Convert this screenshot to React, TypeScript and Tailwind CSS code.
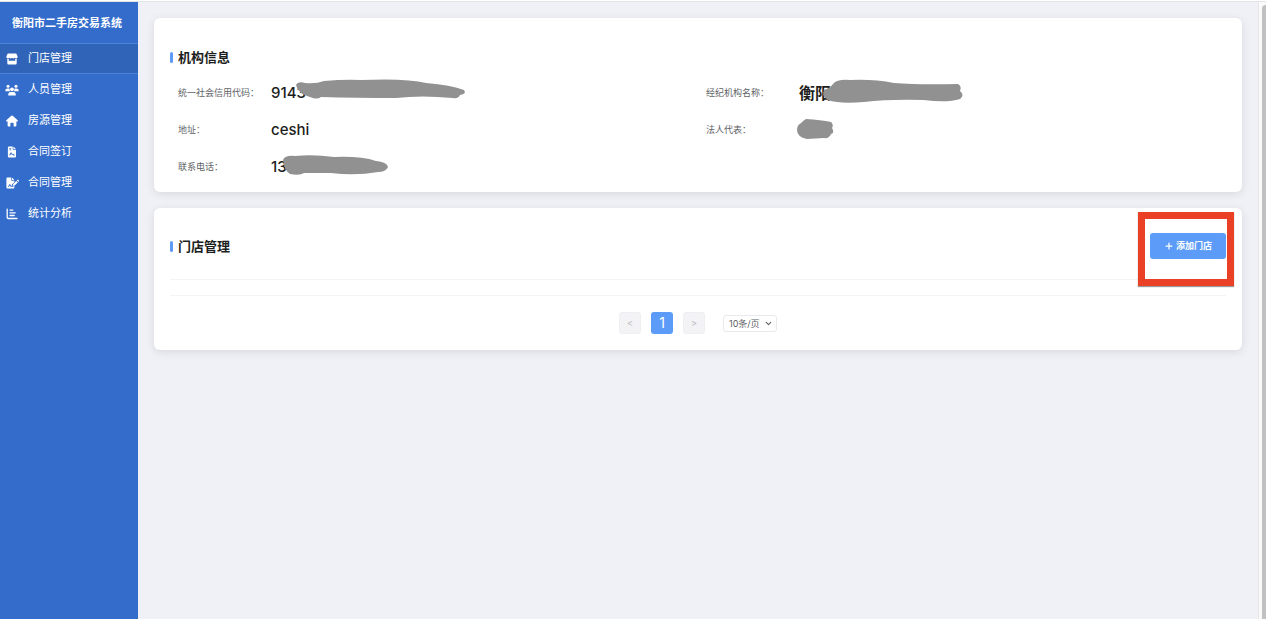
import { FC, ReactNode } from "react"
import { LuChevronDown, LuPlus } from "react-icons/lu"

const StoreIcon: FC = () => (
  <svg viewBox="0 0 12 12" className="h-3 w-3" fill="currentColor">
    <path d="M2.2.6h7.6q.6 0 .8.5l1 2.3q.3 1.9-1.4 2.1-1 0-1.5-.7-.5.7-1.4.7T6 4.8q-.5.7-1.3.7t-1.4-.7q-.5.7-1.5.7Q.1 5.300.4 3.400l1-2.300q.2-.5.8-.5Z" />
    <path d="M1.300 6h1.500v1.800h6.400V6h1.500v4.200q0 1.200-1.200 1.200h-7q-1.200 0-1.200-1.200Z" />
  </svg>
)

const TeamIcon: FC = () => (
  <svg viewBox="0 0 14 12" className="h-3 w-[14px] shrink-0" fill="currentColor">
    <circle cx="3" cy="2.200" r="1.500" />
    <circle cx="11" cy="2.200" r="1.500" />
    <circle cx="7" cy="5.300" r="1.900" />
    <path d="M.3 6.600q0-2.200 2.200-2.200h1.200q.6 0 1 .3-.5 1.400.6 2.500H.8q-.5 0-.5-.6ZM13.700 6.600q0-2.200-2.200-2.200h-1.200q-.6 0-1 .3.5 1.400-.6 2.500h4.500q.5 0 .5-.6Z" />
    <path d="M3.200 11q0-3 2.600-3h2.400q2.600 0 2.600 3 0 .6-.6.6H3.800q-.6 0-.6-.6Z" />
  </svg>
)

const HouseIcon: FC = () => (
  <svg viewBox="0 0 12 12" className="h-3 w-3" fill="currentColor">
    <path d="M6 .5q.4 0 .7.3l5 4.500q.5.9-.4 1.200h-.9v4q0 1-1 1H7.600V8.500q0-.8-.8-.8H5.200q-.8 0-.8.8v3H2.600q-1 0-1-1v-4H.7Q-.2 6.200.3 5.300l5-4.500Q5.600.5 6 .5Z" />
  </svg>
)

const ContractIcon: FC = () => (
  <svg viewBox="0 0 12 12" className="h-3 w-3" fill="currentColor">
    <path
      fillRule="evenodd"
      d="M3 .5h3.700v2.600q0 .7.7.7H10v6.500q0 1.200-1.200 1.200H3.100q-1.200 0-1.200-1.200V1.700Q1.900.5 3 .5ZM3.400 2v.7h1.800V2ZM3.400 3.600v.7h1.800v-.7ZM3.300 9.600h.8l1-2 .8 1.500.8-.6.5.9h1.500v-.8h-.9L7 7.500l-.8.4L5.500 6.500h-.9L3.300 9Z"
    />
    <path d="M7.400.6 9.900 3.100H7.400Z" />
  </svg>
)

const SignIcon: FC = () => (
  <svg viewBox="0 0 13 12" className="h-3 w-[13px] shrink-0" fill="currentColor">
    <path
      fillRule="evenodd"
      d="M1.500.5h3.700v2.600q0 .7.7.7h2.500v1.300L6 7.500 5.600 9.200 4.900 8.600 4.200 7.200h-.9L2 9.900h.9l.9-1.700.7 1.500h2.400l1.500-.7v1.300q0 1.200-1.200 1.200H1.600Q.4 11.500.4 10.300V1.700Q.4.5 1.500.5Z"
    />
    <path d="M5.900.6 8.400 3.100H5.900ZM10.300 3.900l1.500 1.500-3.200 3.200-1.800.4.400-1.900ZM10.800 3.400l.6-.6q.4-.3.8 0l.6.7q.3.4 0 .8l-.5.6Z" />
  </svg>
)

const ChartIcon: FC = () => (
  <svg viewBox="0 0 12 12" className="h-3 w-3" fill="none" stroke="currentColor" strokeWidth="1.3" strokeLinecap="round">
    <path d="M1.200 1.200v8.300q0 1 1 1h8.800M4 2.100h2.800M4 4.800h5.200M4 7.500h4.200" />
  </svg>
)

const menu = [
  { label: "门店管理", icon: <StoreIcon />, active: true },
  { label: "人员管理", icon: <TeamIcon /> },
  { label: "房源管理", icon: <HouseIcon /> },
  { label: "合同签订", icon: <ContractIcon /> },
  { label: "合同管理", icon: <SignIcon /> },
  { label: "统计分析", icon: <ChartIcon /> },
]

const Sidebar: FC = () => (
  <aside className="w-[138px] shrink-0 bg-[#336ccb] text-white">
    <h1 className="flex h-[41px] items-center pt-px pl-3 text-[11px] font-bold">衡阳市二手房交易系统</h1>
    <nav>
      {menu.map((item) => (
        <a
          key={item.label}
          href="#"
          className={
            item.active
              ? "flex h-[31px] items-center gap-[10px] border-y border-[#4d82d8] bg-[#3064b8] pl-[6px] text-[11px]"
              : "flex h-[31px] items-center gap-[10px] pl-[6px] text-[11px]"
          }>
          <span className="flex w-3 justify-center">{item.icon}</span>
          {item.label}
        </a>
      ))}
    </nav>
  </aside>
)

const Title: FC<{ children: ReactNode }> = ({ children }) => (
  <h2 className="flex items-center gap-[5px] text-[13px] leading-5 font-bold text-[#1d1e20]">
    <span className="h-[11px] w-[3px] rounded-sm bg-[#5c9cf8]" />
    {children}
  </h2>
)

const Field: FC<{ label: string; value?: ReactNode; children?: ReactNode }> = ({ label, value, children }) => (
  <div className="flex h-[37px] items-center pl-2">
    <dt className="w-[93px] text-[9px] text-[#606266]">{label}</dt>
    <dd className="relative h-6 text-[15px] leading-6 font-medium text-[#1d1e20]">
      {value}
      {children}
    </dd>
  </div>
)

// grey scribble over private data
const Scribble: FC<{ d: string }> = ({ d }) => (
  <svg className="absolute top-0 left-0 h-6 w-50 overflow-visible" viewBox="0 0 200 24" fill="#919191">
    <path d={d} />
  </svg>
)

const App: FC = () => {
  return (
    <div className="flex h-screen flex-col bg-[#f0f1f6] font-['Inter','Noto_Sans_CJK_SC',sans-serif]">
      <div className="h-[2px] shrink-0 border-b border-[#e2e3e6] bg-white" />
      <div className="flex min-h-0 grow">
        <Sidebar />
        <main className="flex min-w-0 grow flex-col gap-4 p-4">
          <section className="rounded-md bg-white px-4 pt-[29px] pb-[7px] shadow-[0_2px_10px_rgba(0,0,0,0.1)]">
            <Title>机构信息</Title>
            <dl className="mt-[7px] grid grid-cols-2">
              <Field label="统一社会信用代码：" value="9143">
                <Scribble d="M25 4 Q27 0 34 2 Q45 3 53 0 Q75-2 90-1 Q135-3 155 2 Q180 4 193 9 Q196 13 189 14 Q187 18 182 17 Q150 14 125 17 Q85 17 50 16 Q46 19 39 16 Q27 13 25 4Z" />
              </Field>
              <Field label="经纪机构名称：" value={<span className="text-base font-bold">衡阳</span>}>
                <Scribble d="M25 9 Q31 7 34 3 Q38-2 51-1 Q75-2 95 2 Q120 4 159 3 Q163 5 161 10 Q166 14 161 18 Q148 22 125 19 Q90 18 65 21 Q40 23 29 19 Q22 15 25 9Z" />
              </Field>
              <Field label="地址：" value="ceshi" />
              <Field label="法人代表：">
                <Scribble d="M2 5 Q5 2 7 1 Q22 2 32 4 Q35 7 33 10 Q36 15 32 16 Q30 21 25 20 L8 21 Q-2 19-2 12 Q-2 7 2 5Z" />
              </Field>
              <Field label="联系电话：" value="13">
                <Scribble d="M12 5 Q14 0 24 1 Q42-1 63 2 Q90 1 105 6 Q116 7 117 12 Q115 17 107 17 Q85 21 60 18 Q44 18 33 18 Q29 21 19 19 Q13 15 12 5Z" />
              </Field>
            </dl>
          </section>

          <section className="rounded-md bg-white px-4 pt-[25px] pb-4 shadow-[0_2px_10px_rgba(0,0,0,0.1)]">
            <div className="flex items-center justify-between">
              <Title>门店管理</Title>
              <div className="relative">
                <button className="flex h-[26px] w-[76px] items-center justify-center gap-[2px] rounded-[3px] bg-[#5c9cf8] text-[9px] font-bold text-white">
                  <LuPlus className="h-[10px] w-[10px]" strokeWidth={3} />
                  添加门店
                </button>
                <div className="pointer-events-none absolute -top-[21px] -right-2 h-[74px] w-24 border-[7px] border-[#ea4025] shadow-[0_1px_1px_rgba(0,0,0,0.4)]" />
              </div>
            </div>
            <div className="mt-5 h-[17px] border-y border-[#f3f4f8]" />
            <div className="mt-4 flex items-center justify-center gap-[10px]">
              <button className="h-[22px] w-[22px] rounded-[3px] border border-[#eeeff2] bg-[#f3f3f5] text-[9px] text-[#b5b8bf]">&lt;</button>
              <button className="h-[22px] w-[22px] rounded-[3px] bg-[#5c9cf8] text-sm text-white">1</button>
              <button className="h-[22px] w-[22px] rounded-[3px] border border-[#eeeff2] bg-[#f3f3f5] text-[9px] text-[#b5b8bf]">&gt;</button>
              <div className="relative ml-2">
                <select
                  aria-label="每页条数"
                  className="block h-[17px] w-[54px] appearance-none rounded-[3px] border border-[#e8e9ed] bg-white pl-[5px] text-[9px] leading-[15px] text-[#606266]">
                  <option>10条/页</option>
                </select>
                <LuChevronDown className="pointer-events-none absolute top-1 right-1 h-[9px] w-[9px] text-[#606266]" strokeWidth={3} />
              </div>
            </div>
          </section>
        </main>
        <div className="flex w-2 shrink-0 border-l border-[#e6e6e8] bg-[#fafafa] pt-[3px] pl-[3px]">
          <div className="grow rounded-tl-md bg-[#c1c1c1]" />
        </div>
      </div>
    </div>
  )
}

export default App
